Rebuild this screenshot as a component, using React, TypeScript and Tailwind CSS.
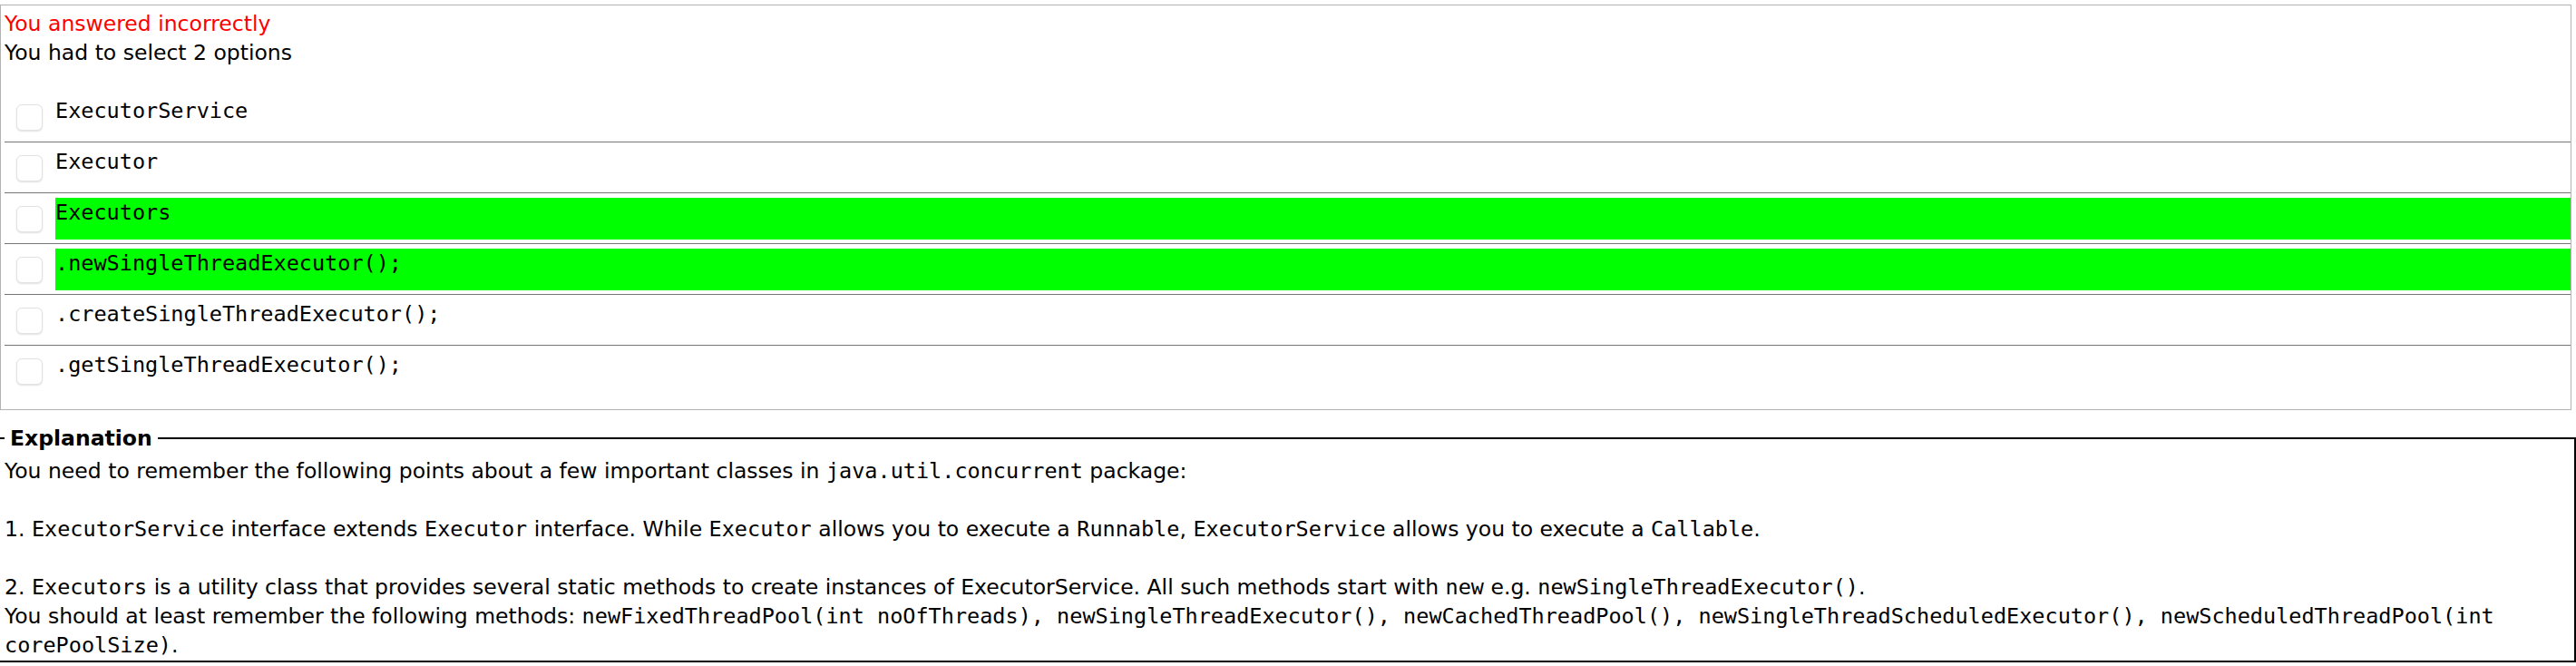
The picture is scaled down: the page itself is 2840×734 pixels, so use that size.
const options = [
  { text: 'ExecutorService', correct: false },
  { text: 'Executor', correct: false },
  { text: 'Executors', correct: true },
  { text: '.newSingleThreadExecutor();', correct: true },
  { text: '.createSingleThreadExecutor();', correct: false },
  { text: '.getSingleThreadExecutor();', correct: false },
];

function Code({ children }: { children: React.ReactNode }) {
  return <span className="font-['DejaVu_Sans_Mono',monospace]">{children}</span>;
}

function OptionRow({ text, correct, first }: { text: string; correct: boolean; first: boolean }) {
  return (
    <div className={`flex items-start h-[56px] ${first ? 'pt-[1px]' : 'border-t border-[#777777]'}`}>
      <div className="ml-[13px] mt-[14px] w-[29px] h-[29px] shrink-0 rounded-[6px] border border-[#e2e2e2] bg-white shadow-[0_1px_2px_rgba(0,0,0,0.12)]" />
      <div
        className={`ml-[14px] mt-[5px] h-[46px] flex-1 font-['DejaVu_Sans_Mono',monospace] ${
          correct ? 'bg-[#00ff00]' : ''
        }`}
      >
        {text}
      </div>
    </div>
  );
}

export default function App() {
  return (
    <div className="min-h-screen bg-white text-black font-['DejaVu_Sans',Verdana,sans-serif] text-[23.5px] leading-[32px]">
      <div className="mt-[5px] w-[2835px] border border-[#b3b3b3] pt-[4px] pl-[4px] pb-[15px]">
        <div className="text-[#ff0000]">You answered incorrectly</div>
        <div>You had to select 2 options</div>
        <div className="mt-[26px]">
          {options.map((o, i) => (
            <OptionRow key={o.text} text={o.text} correct={o.correct} first={i === 0} />
          ))}
        </div>
      </div>

      <fieldset className="mt-[15px] -ml-[2px] w-[2842px] border-2 border-black pl-[5px] pb-[1px]">
        <legend className="px-[6px] font-bold">Explanation</legend>
        <div className="pt-[4px]">
          You need to remember the following points about a few important classes in <Code>java.util.concurrent</Code> package:
          <br />
          <br />
          1. <Code>ExecutorService</Code> interface extends <Code>Executor</Code> interface. While <Code>Executor</Code> allows you to
          execute a <Code>Runnable</Code>, <Code>ExecutorService</Code> allows you to execute a <Code>Callable</Code>.
          <br />
          <br />
          2. <Code>Executors</Code> is a utility class that provides several static methods to create instances of ExecutorService.
          All such methods start with <Code>new</Code> e.g. <Code>newSingleThreadExecutor()</Code>.
          <br />
          You should at least remember the following methods:{' '}
          <Code>
            newFixedThreadPool(int noOfThreads), newSingleThreadExecutor(), newCachedThreadPool(),
            newSingleThreadScheduledExecutor(), newScheduledThreadPool(int
          </Code>
          <br />
          <Code>corePoolSize)</Code>.
        </div>
      </fieldset>
    </div>
  );
}
